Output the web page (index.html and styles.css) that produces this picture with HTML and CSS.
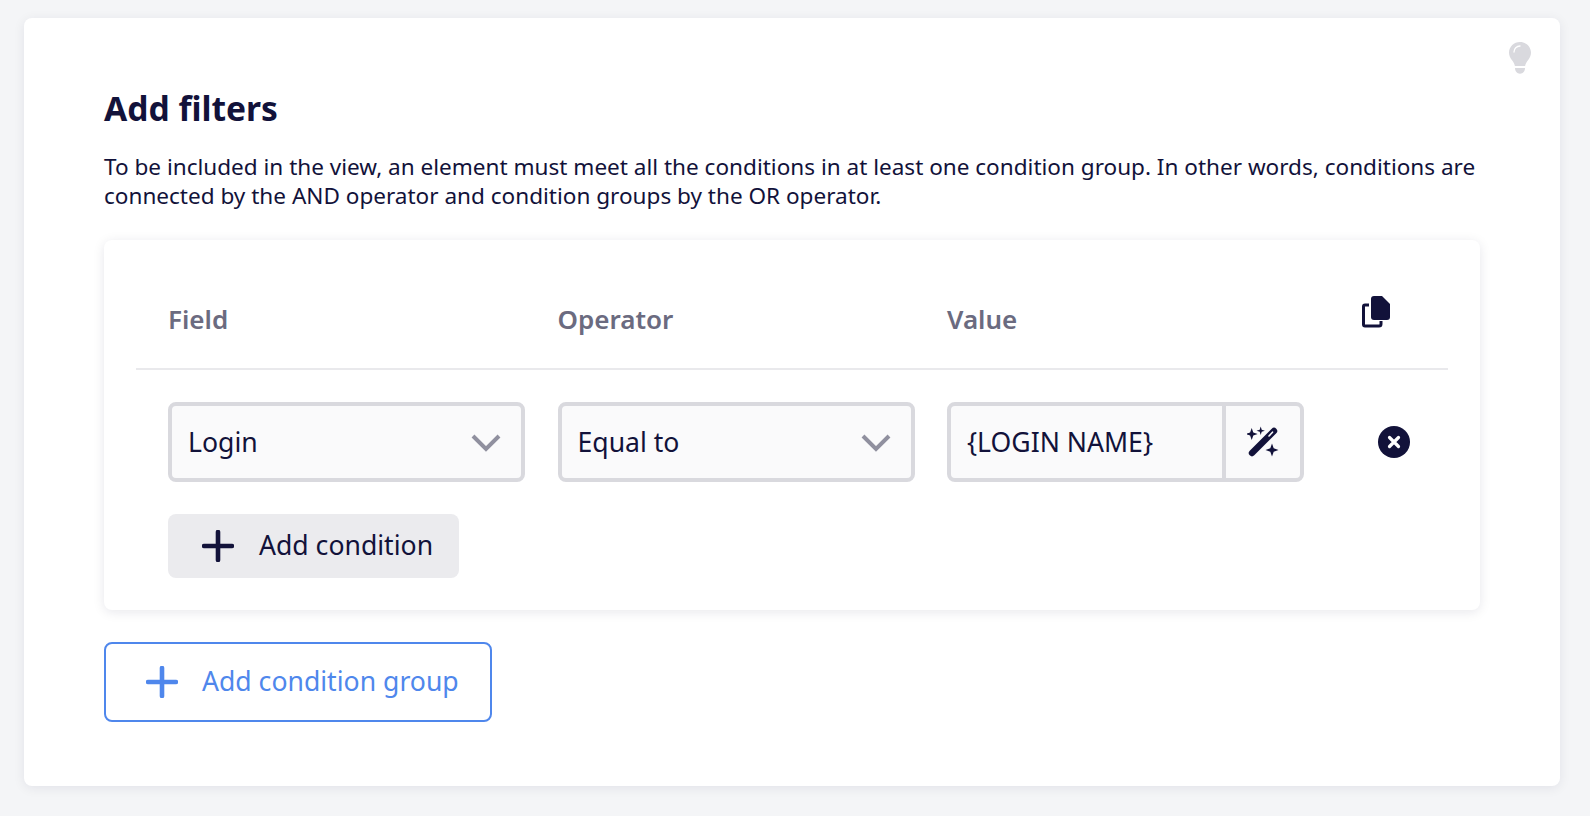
FILE: index.html
```html
<!DOCTYPE html>
<html lang="en">
<head>
<meta charset="utf-8">
<title>Add filters</title>
<link rel="stylesheet" href="styles.css">
</head>
<body>
<main class="card">
  <svg class="bulb" viewBox="0 0 22 32" width="22" height="32" aria-hidden="true">
    <path fill="#d9d9de" d="M11 0C5 0 0 4.700 0 10.600c0 3 1.100 5.200 2.800 7.400 1.400 1.800 2.600 3.700 3.100 6h10.200c.5-2.300 1.700-4.200 3.100-6 1.700-2.200 2.800-4.400 2.800-7.400C22 4.700 17 0 11 0z"/>
    <path fill="none" stroke="#fff" stroke-width="1.300" stroke-linecap="round" d="M5 10c0-3.300 2.600-6 6-6"/>
    <path fill="#d9d9de" d="M6 26h10c0 3.400-2 5.700-5 5.700S6 29.400 6 26z"/>
  </svg>
  <h1 class="title">Add filters</h1>
  <p class="intro">To be included in the view, an element must meet all the conditions in at least one condition group. In other words, conditions are connected by the AND operator and condition groups by the OR operator.</p>
  <section class="panel">
    <div class="head">
      <span class="col label">Field</span>
      <span class="col label">Operator</span>
      <span class="col label">Value</span>
      <svg class="copy" viewBox="0 0 28 32" width="28" height="32" aria-hidden="true">
        <path fill="none" stroke="#12123a" stroke-width="3" stroke-linejoin="round" d="M7 9H3a1.500 1.500 0 0 0-1.500 1.500v18A1.500 1.500 0 0 0 3 30h14a2 2 0 0 0 2-2v-3"/>
        <path fill="#12123a" d="M12 0h8l8 8v13a3 3 0 0 1-3 3H12a3 3 0 0 1-3-3V3a3 3 0 0 1 3-3z"/>
      </svg>
    </div>
    <div class="row">
      <div class="col">
        <div class="select"><span class="field-text">Login</span>
          <svg class="chev" viewBox="0 0 30 18" width="30" height="18" aria-hidden="true"><path fill="none" stroke="#90909f" stroke-width="4" d="M2 2l13 13L28 2"/></svg>
        </div>
      </div>
      <div class="col">
        <div class="select"><span class="field-text">Equal to</span>
          <svg class="chev" viewBox="0 0 30 18" width="30" height="18" aria-hidden="true"><path fill="none" stroke="#90909f" stroke-width="4" d="M2 2l13 13L28 2"/></svg>
        </div>
      </div>
      <div class="col">
        <div class="value">
          <span class="value-text">{LOGIN NAME}</span>
          <span class="wand">
            <svg viewBox="0 0 32 32" width="32" height="32" aria-hidden="true">
              <path stroke="#12123a" stroke-width="6.400" stroke-linecap="round" d="M5 27L27 5"/>
              <path stroke="#fafafb" stroke-width="1.600" stroke-linecap="round" d="M22 10l3.500-3.800"/>
              <path fill="#12123a" d="M4.700 2l1.600 4.400L10.700 8 6.300 9.600 4.700 14 3.100 9.600-1.300 8l4.400-1.600zM13.700 .5l1 3.200 3.200 1-3.200 1-1 3.200-1-3.200-3.200-1 3.200-1zM25 17.500l1.700 4.800 4.800 1.700-4.800 1.700-1.700 4.800-1.700-4.800-4.800-1.700 4.800-1.700z"/>
            </svg>
          </span>
        </div>
      </div>
      <svg class="close" viewBox="0 0 32 32" width="32" height="32" aria-hidden="true">
        <circle cx="16" cy="16" r="16" fill="#12123a"/>
        <path stroke="#fff" stroke-width="3.200" stroke-linecap="round" d="M11.500 11.500l9 9M20.500 11.500l-9 9"/>
      </svg>
    </div>
    <button class="add" type="button">
      <svg viewBox="0 0 32 32" width="32" height="32" aria-hidden="true"><path stroke="#12123a" stroke-width="4.600" stroke-linecap="round" d="M16 2v28M2 16h28"/></svg>
      <span class="txt">Add condition</span>
    </button>
  </section>
  <button class="add-group" type="button">
    <svg viewBox="0 0 32 32" width="32" height="32" aria-hidden="true"><path stroke="#4f87ec" stroke-width="4.600" stroke-linecap="round" d="M16 2v28M2 16h28"/></svg>
    <span class="txt">Add condition group</span>
  </button>
</main>
</body>
</html>
```
FILE: styles.css
```css
* { box-sizing: border-box; }
html, body { height: 100%; }
body {
  margin: 0;
  padding: 18px 30px 30px 24px;
  background: #f4f5f7;
  color: #12123a;
  font-family: "Noto Sans", "Open Sans", sans-serif;
  overflow: hidden;
}
.card {
  position: relative;
  height: 768px;
  padding: 70px 80px 0;
  background: #fff;
  border-radius: 8px;
  box-shadow: 0 2px 12px rgba(18, 18, 58, .08);
}
.bulb { position: absolute; top: 24px; right: 29px; }
.title {
  margin: 0;
  font-size: 33.600px;
  line-height: 40px;
  font-weight: 700;
}
.intro {
  margin: 24px 0 0;
  font-size: 22.550px;
  line-height: 29px;
  width: 1376px;
}
.panel {
  width: 1376px;
  height: 370px;
  margin-top: 30px;
  padding: 0 32px;
  border-radius: 8px;
  box-shadow: 0 2px 12px rgba(18, 18, 58, .1);
}
.head {
  position: relative;
  display: flex;
  align-items: flex-end;
  height: 130px;
  padding: 0 32px 32px;
  border-bottom: 2px solid #e9e9ec;
}
.col { width: 357px; margin-right: 32.500px; flex: none; }
.label { font-size: 26px; line-height: 34px; font-weight: 600; color: #6b6b80; }
.copy { position: absolute; left: 1226px; top: 56px; }
.row {
  display: flex;
  align-items: center;
  padding: 32px 32px 0;
}
.select, .value {
  display: flex;
  align-items: center;
  height: 80px;
  background: #fafafb;
  border: 4px solid #d9d9de;
  border-radius: 8px;
  font-size: 26.600px;
}
.select { justify-content: space-between; padding: 0 20px 0 16px; }
.txt { padding-bottom: 2px; }
.chev { margin-top: 2px; }
.value-text { flex: 1; padding-left: 16px; }
.wand {
  display: flex;
  align-items: center;
  justify-content: center;
  width: 78px;
  height: 100%;
  border-left: 4px solid #d9d9de;
}
.close { margin-left: 41px; flex: none; }
.add, .add-group {
  display: flex;
  align-items: center;
  font-family: inherit;
  font-size: 26.600px;
  cursor: pointer;
}
.add {
  gap: 25px;
  width: 291px;
  height: 64px;
  margin: 32px 0 0 32px;
  padding: 0 0 0 34px;
  background: #ebebee;
  color: #12123a;
  border: 0;
  border-radius: 8px;
}
.add-group {
  gap: 24px;
  width: 388px;
  height: 80px;
  margin-top: 32px;
  padding: 0 0 0 40px;
  background: #fff;
  color: #4f87ec;
  border: 2px solid #4f87ec;
  border-radius: 8px;
}
```
